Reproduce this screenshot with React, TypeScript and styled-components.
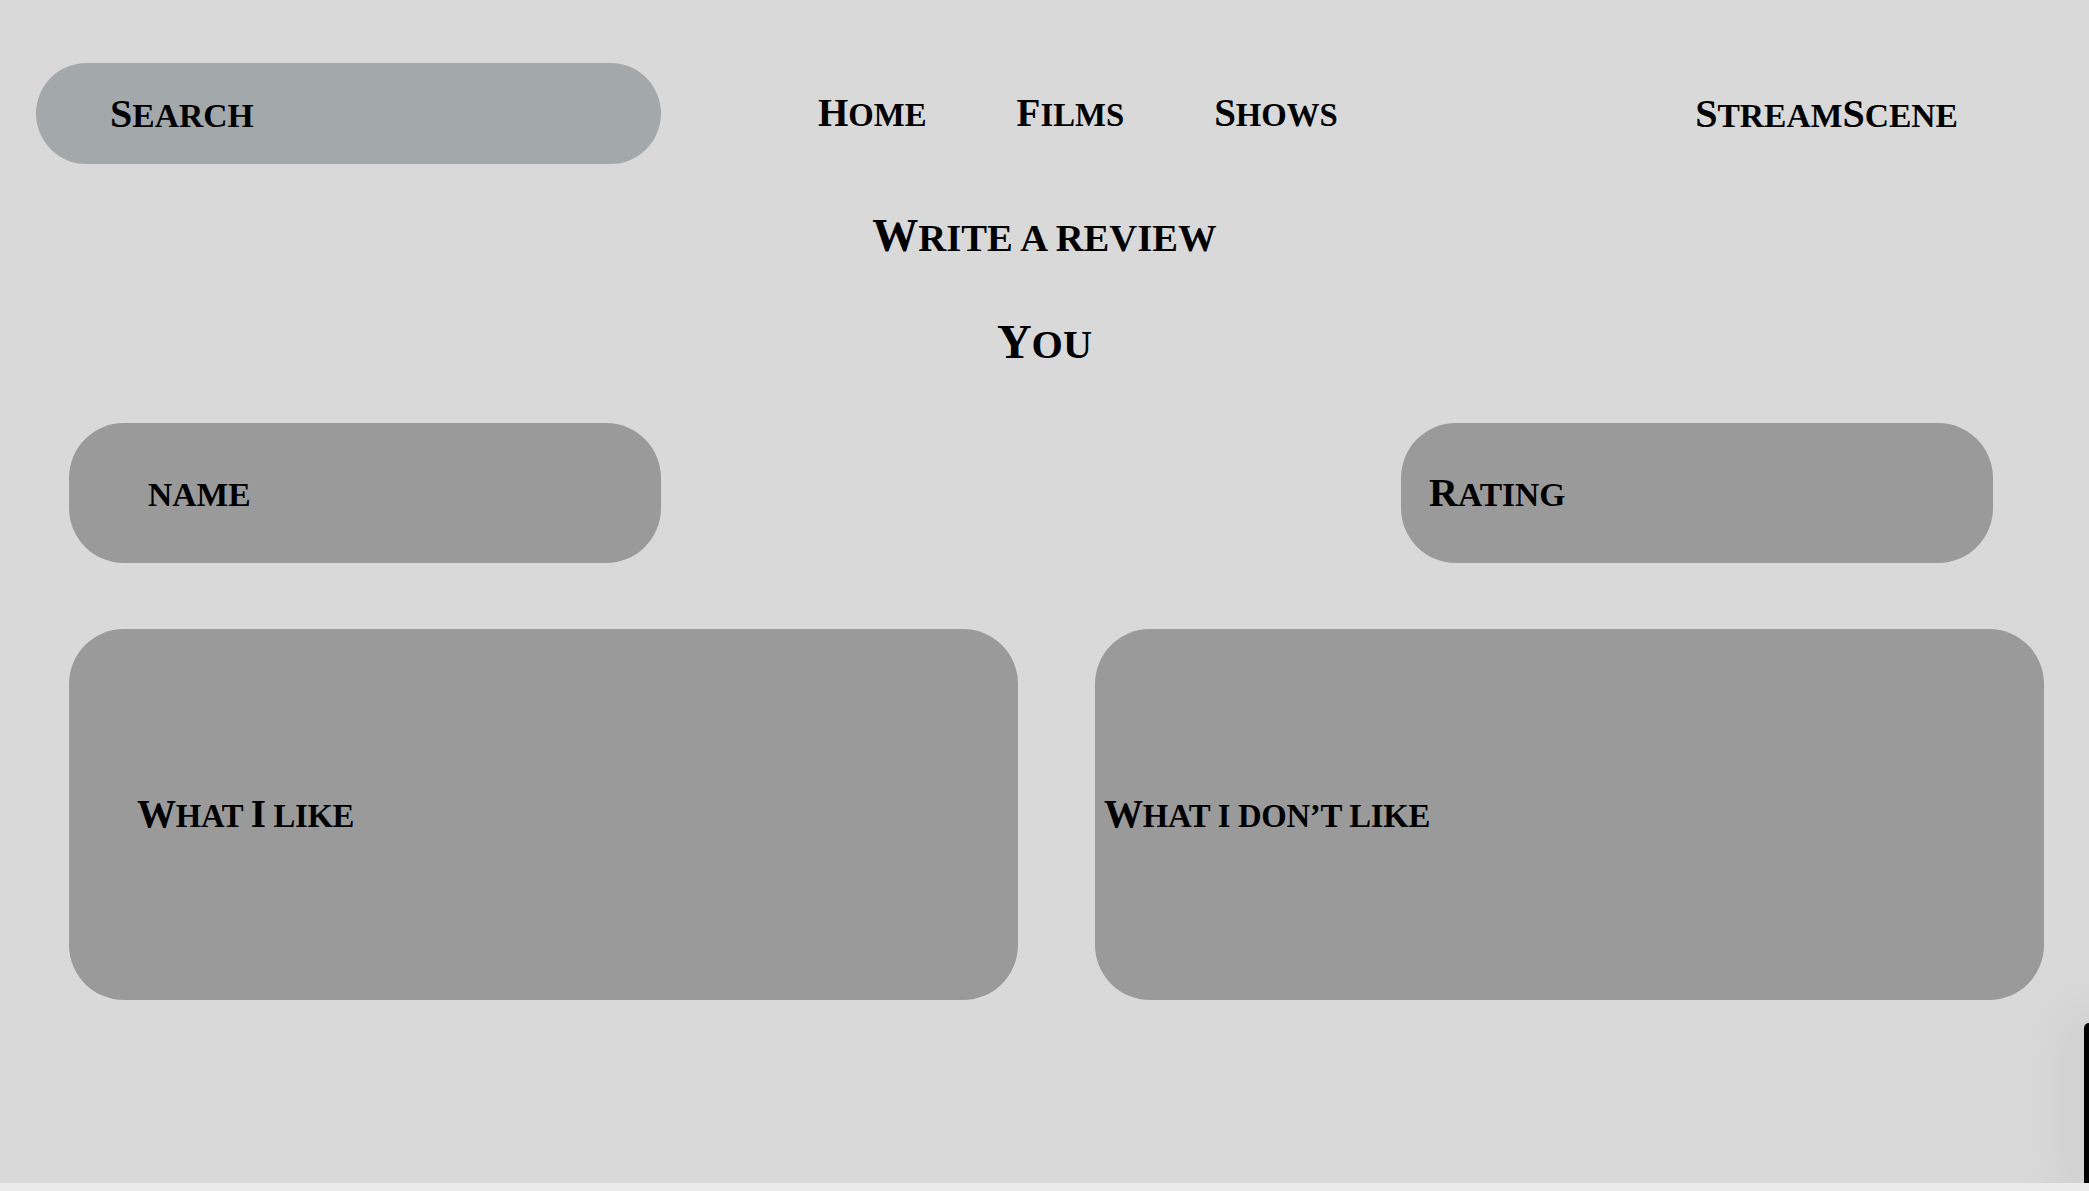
import React from "react";
import styled, { createGlobalStyle } from "styled-components";

const Global = createGlobalStyle`
  html, body { margin: 0; padding: 0; }
  body {
    background: #ebebeb;
    font-family: "Liberation Serif", "Times New Roman", serif;
    font-weight: 700;
    color: #000;
    overflow: hidden;
  }
`;

const Page = styled.div`
  position: relative;
  height: 1183px;
  background: #d9d9d9;
  display: flex;
  flex-direction: column;
  overflow: hidden;
`;

const Header = styled.header`
  display: flex;
  align-items: center;
  padding: 63px 131px 0 36px;
`;

const SearchPill = styled.div`
  width: 625px;
  height: 101px;
  border-radius: 51px;
  background: #a3a8ab;
  display: flex;
  align-items: center;
  padding-left: 74px;
  box-sizing: border-box;
  font-size: 40px;
  line-height: 1.15;
`;

const Nav = styled.nav`
  display: flex;
  gap: 90px;
  margin-left: 157px;
  font-size: 39px;
  line-height: 1.15;
`;

const NavItem = styled.span``;

const Brand = styled.div`
  margin-left: auto;
  font-size: 40px;
  line-height: 1.15;
`;

const Title = styled.h1<{ $size: number; $top: number }>`
  margin: ${(p) => p.$top}px 0 0;
  text-align: center;
  font-size: ${(p) => p.$size}px;
  font-weight: 700;
  line-height: 1.15;
`;

const FieldRow = styled.div`
  display: flex;
  justify-content: space-between;
  padding: 0 96px 0 69px;
  margin-top: 54px;
`;

const Field = styled.div<{ $pad: number }>`
  width: 592px;
  height: 140px;
  border-radius: 55px;
  background: #9a9a9a;
  display: flex;
  align-items: center;
  box-sizing: border-box;
  padding-left: ${(p) => p.$pad}px;
  font-size: 40px;
  line-height: 1.15;
`;

const AreaRow = styled.div`
  display: flex;
  gap: 77px;
  padding-left: 69px;
  margin-top: 66px;
`;

const Area = styled.div<{ $pad: number }>`
  width: 949px;
  height: 371px;
  border-radius: 55px;
  background: #9a9a9a;
  display: flex;
  align-items: center;
  box-sizing: border-box;
  padding-left: ${(p) => p.$pad}px;
  font-size: 39px;
  line-height: 1.15;
  letter-spacing: -0.3px;
`;

const Label = styled.span`
  white-space: pre;
`;

const EdgeBar = styled.div`
  position: absolute;
  right: 0;
  bottom: 0;
  width: 5px;
  height: 160px;
  background: #000;
  border-top-left-radius: 6px;
  box-shadow: 0 0 60px 20px rgba(0, 0, 0, 0.06);
`;

const Lower = styled.span`
  font-size: 0.84em;
  text-transform: uppercase;
`;

function SmallCaps({ text }: { text: string }) {
  const parts: { t: string; low: boolean }[] = [];
  for (const ch of text) {
    const low = ch !== ch.toUpperCase() || ch === " " || ch === "’";
    const last = parts[parts.length - 1];
    if (last && last.low === low) last.t += ch;
    else parts.push({ t: ch, low });
  }
  return (
    <Label>
      {parts.map((p, i) =>
        p.low ? <Lower key={i}>{p.t}</Lower> : <React.Fragment key={i}>{p.t}</React.Fragment>
      )}
    </Label>
  );
}

export default function App() {
  return (
    <>
      <Global />
      <Page>
        <Header>
          <SearchPill>
            <SmallCaps text="Search" />
          </SearchPill>
          <Nav>
            <NavItem><SmallCaps text="Home" /></NavItem>
            <NavItem><SmallCaps text="Films" /></NavItem>
            <NavItem><SmallCaps text="Shows" /></NavItem>
          </Nav>
          <Brand>
            <SmallCaps text="StreamScene" />
          </Brand>
        </Header>
        <Title $size={46} $top={46}>
          <SmallCaps text="Write a review" />
        </Title>
        <Title $size={48} $top={51}>
          <SmallCaps text="You" />
        </Title>
        <FieldRow>
          <Field $pad={79}>
            <SmallCaps text="name" />
          </Field>
          <Field $pad={28}>
            <SmallCaps text="Rating" />
          </Field>
        </FieldRow>
        <AreaRow>
          <Area $pad={68}>
            <SmallCaps text="What I like" />
          </Area>
          <Area $pad={9}>
            <SmallCaps text="What i don’t like" />
          </Area>
        </AreaRow>
        <EdgeBar />
      </Page>
    </>
  );
}
